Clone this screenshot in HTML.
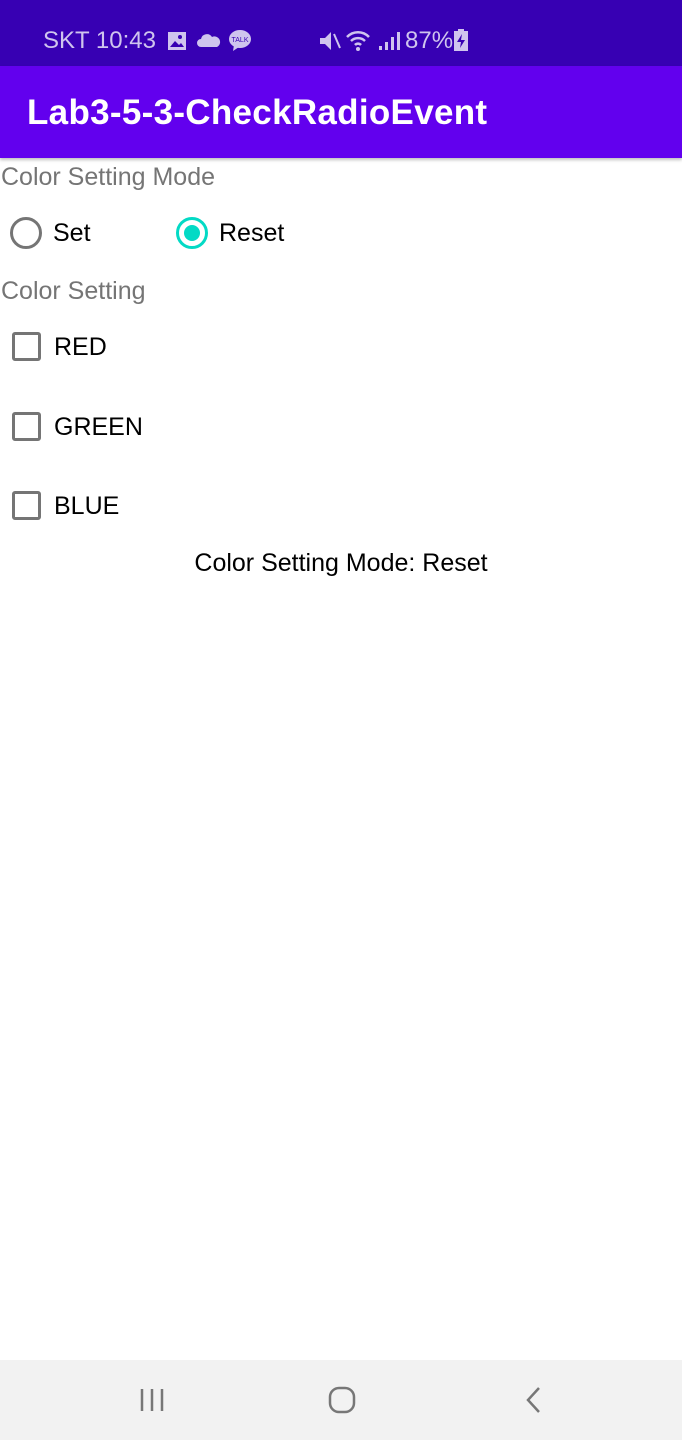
<!DOCTYPE html>
<html><head><meta charset="utf-8"><style>
*{margin:0;padding:0;box-sizing:border-box}
body{width:682px;height:1440px;position:relative;background:#fff;font-family:"Liberation Sans",sans-serif;overflow:hidden}
.sb{position:absolute;left:0;top:0;width:682px;height:66px;background:#3700b3;color:#cfc4ee;font-size:24px}
.ab{position:absolute;left:0;top:66px;width:682px;height:92px;background:#6200ee;box-shadow:0 2px 3px rgba(0,0,0,.25)}
.ab span{position:absolute;left:27px;top:27px;color:#fff;font-size:35px;font-weight:bold;letter-spacing:0.3px}
.t{position:absolute;font-size:25px}
.g{color:#757575}
.radio{position:absolute;width:32px;height:32px;border-radius:50%;border:3px solid #757575}
.cb{position:absolute;left:12px;width:29px;height:29px;border:3px solid #757575;border-radius:3px}
.nav{position:absolute;left:0;top:1360px;width:682px;height:80px;background:#f2f2f2}
</style></head><body>
<div class="sb">
<span style="position:absolute;left:43px;top:27px">SKT 10:43</span>
<svg style="position:absolute;left:167px;top:31px" width="20" height="20"><rect x="1" y="1" width="18" height="18" fill="#cfc4ee"/><path d="M3 16l5-6 4 4 2-2 3 4z" fill="#3700b3"/><circle cx="13" cy="6" r="2" fill="#3700b3"/></svg>
<svg style="position:absolute;left:197px;top:32px" width="24" height="16"><path d="M4 15a4 4 0 0 1 0-8 6 6 0 0 1 11-2 5 5 0 0 1 5 10z" fill="#cfc4ee"/></svg>
<svg style="position:absolute;left:228px;top:28px" width="24" height="24"><ellipse cx="12" cy="11" rx="11" ry="9" fill="#cfc4ee"/><path d="M6 17l-1 6 6-4z" fill="#cfc4ee"/><text x="12" y="14" font-size="7" text-anchor="middle" fill="#3700b3" font-family="Liberation Sans">TALK</text></svg>
<svg style="position:absolute;left:318px;top:30px" width="24" height="22"><path d="M2 8h5l6-6v18l-6-6H2z" fill="#cfc4ee"/><path d="M16 4l6 14" stroke="#cfc4ee" stroke-width="2"/></svg>
<svg style="position:absolute;left:345px;top:28px" width="28" height="24"><path d="M2 9a15 15 0 0 1 22 0M6 13a10 10 0 0 1 14 0M10 17a4 4 0 0 1 6 0" stroke="#cfc4ee" stroke-width="2.5" fill="none"/><circle cx="13" cy="21" r="2" fill="#cfc4ee"/></svg>
<svg style="position:absolute;left:378px;top:31px" width="22" height="20"><rect x="1" y="15" width="3" height="4" fill="#cfc4ee"/><rect x="7" y="11" width="3" height="8" fill="#cfc4ee"/><rect x="13" y="6" width="3" height="13" fill="#cfc4ee"/><rect x="19" y="1" width="3" height="18" fill="#cfc4ee"/></svg>
<span style="position:absolute;left:405px;top:27px">87%</span>
<svg style="position:absolute;left:454px;top:29px" width="14" height="22"><rect x="4" y="0" width="6" height="3" fill="#cfc4ee"/><rect x="0" y="2" width="14" height="20" fill="#cfc4ee"/><path d="M8 5l-5 8h4l-1 6 5-8H7z" fill="#3700b3"/></svg>
</div>
<div class="ab"><span>Lab3-5-3-CheckRadioEvent</span></div>
<div class="t g" style="left:1px;top:163px">Color Setting Mode</div>
<div class="radio" style="left:10px;top:217px"></div>
<div class="t" style="left:53px;top:219px">Set</div>
<div class="radio" style="left:176px;top:217px;border-color:#03dac5"><div style="position:absolute;left:5px;top:5px;width:16px;height:16px;border-radius:50%;background:#03dac5"></div></div>
<div class="t" style="left:219px;top:219px">Reset</div>
<div class="t g" style="left:1px;top:277px">Color Setting</div>
<div class="cb" style="top:332px"></div><div class="t" style="left:54px;top:333px">RED</div>
<div class="cb" style="top:412px"></div><div class="t" style="left:54px;top:413px">GREEN</div>
<div class="cb" style="top:491px"></div><div class="t" style="left:54px;top:492px">BLUE</div>
<div class="t" style="left:0;width:682px;text-align:center;top:549px">Color Setting Mode: Reset</div>
<div class="nav">
<svg style="position:absolute;left:139px;top:27px" width="26" height="26"><path d="M3 2v22M13 2v22M23 2v22" stroke="#777" stroke-width="2.5"/></svg>
<svg style="position:absolute;left:328px;top:26px" width="28" height="28"><rect x="2" y="2" width="24" height="24" rx="9" fill="none" stroke="#777" stroke-width="2.5"/></svg>
<svg style="position:absolute;left:524px;top:26px" width="18" height="28"><path d="M15 2L4 14l11 12" fill="none" stroke="#777" stroke-width="2.5"/></svg>
</div>
</body></html>
